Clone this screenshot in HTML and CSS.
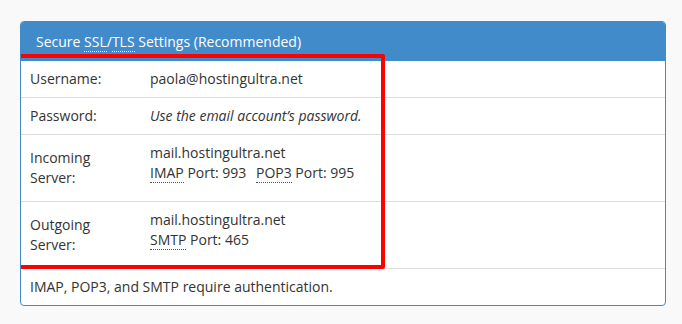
FILE: index.html
```html
<!DOCTYPE html>
<html>
<head>
	<meta charset=utf-8>
	<title>Mail Client Settings</title>
	<link rel="stylesheet" href="styles.css">
</head>
<body>
<section class=panel>
	<header class=panel-heading>
		Secure <abbr title="Secure Sockets Layer">SSL</abbr>/<abbr title="Transport Layer Security">TLS</abbr> Settings (Recommended)
	</header>
	<div class=settings>
		<div class=highlight></div>
		<table>
			<tr>
				<td class=label>Username:</td>
				<td class=value>paola@hostingultra.net</td>
			</tr>
			<tr>
				<td class=label>Password:</td>
				<td class=value><em>Use the email account’s password.</em></td>
			</tr>
			<tr class=server>
				<td class=label>Incoming Server:</td>
				<td class=value>
					mail.hostingultra.net<br>
					<span class=port><abbr title="Internet Message Access Protocol">IMAP</abbr> Port: 993</span>
					<span class=port><abbr title="Post Office Protocol 3">POP3</abbr> Port: 995</span>
				</td>
			</tr>
			<tr class=server>
				<td class=label>Outgoing Server:</td>
				<td class=value>
					mail.hostingultra.net<br>
					<span class=port><abbr title="Simple Mail Transfer Protocol">SMTP</abbr> Port: 465</span>
				</td>
			</tr>
			<tr>
				<td colspan=2 class=note>IMAP, POP3, and SMTP require authentication.</td>
			</tr>
		</table>
	</div>
</section>
</body>
</html>
```

FILE: styles.css
```css
* {
	margin: 0;
	padding: 0;
	box-sizing: border-box;
}
html {
	background: #f9f9f9;
}
body {
	padding: 21px 17px 0 20px;
	font-family: "Open Sans", sans-serif;
	font-size: 14px;
	line-height: 20px;
	color: #333;
}
abbr {
	text-decoration: none;
	border-bottom: 1px dotted #555;
	cursor: help;
}
.panel {
	width: 646px;
	border: 1px solid #428bca;
	border-radius: 4px;
	background: white;
	overflow: hidden;
}
.panel-heading {
	height: 39px;
	padding: 9px 15px 0;
	background: #428bca;
	color: white;
	font-size: 14px;
	line-height: 22px;
}
.panel-heading abbr {
	border-bottom-color: white;
}
.settings {
	position: relative;
}
.highlight {
	position: absolute;
	top: -7px;
	left: -7px;
	width: 371px;
	height: 215px;
	border: 4px solid #ff0000;
	border-radius: 2px;
	pointer-events: none;
}
table {
	width: 100%;
	border-collapse: collapse;
}
td {
	padding: 8px 10px;
	vertical-align: top;
}
tr + tr td {
	border-top: 1px solid #ddd;
}
td.label,
td.note {
	padding-left: 9px;
}
td.label {
	width: 119px;
	vertical-align: middle;
}
.server td.value {
	padding-bottom: 18px;
}
.port {
	margin-right: 6px;
}
```
